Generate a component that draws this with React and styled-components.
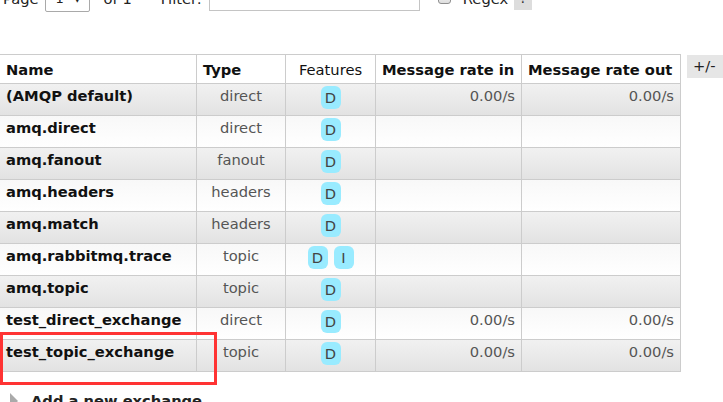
import React from "react";
import styled, { createGlobalStyle } from "styled-components";

const Global = createGlobalStyle`
  html, body { margin: 0; padding: 0; background: #fff; }
  body {
    font-family: "DejaVu Sans", Verdana, sans-serif;
    font-size: 14.7px;
    color: #222;
    overflow: hidden;
  }
`;

const Page = styled.div`
  position: relative;
  width: 723px;
  height: 402px;
  overflow: hidden;
`;

const Controls = styled.div`
  display: flex;
  align-items: center;
  height: 24px;
  margin-top: -12px;
  padding-left: 3px;
`;

const Label = styled.span`
  line-height: 17px;
  padding-bottom: 4px;
  margin-right: ${(p) => p.$mr || 0}px;
  color: #222;
  white-space: nowrap;
`;

const SelectBox = styled.div`
  box-sizing: border-box;
  width: 45px;
  height: 23px;
  border: 1px solid #a9a9a9;
  border-radius: 2px;
  display: flex;
  align-items: center;
  justify-content: space-between;
  padding: 0 8px 4px 10px;
  margin-right: 14px;
  font-size: 13px;
`;

const TextInput = styled.div`
  box-sizing: border-box;
  width: 211px;
  height: 22px;
  border: 1px solid #c4c4c4;
  margin-right: 18px;
  margin-bottom: 1px;
`;

const Check = styled.span`
  box-sizing: border-box;
  width: 13px;
  height: 13px;
  border: 1px solid #8f8f8f;
  border-radius: 3px;
  background: linear-gradient(#fcfcfc, #dedede);
  margin-right: 12px;
  margin-bottom: 6px;
`;

const Help = styled.span`
  display: inline-block;
  width: 18px;
  height: 20px;
  margin-left: 6px;
  background: #ddd;
  text-align: center;
  line-height: 16px;
  color: #333;
`;

const TableArea = styled.div`
  display: flex;
  align-items: flex-start;
  gap: 6px;
  margin-top: 42px;
  margin-left: -1px;
`;

const Table = styled.table`
  border-collapse: collapse;
  table-layout: fixed;
  width: 681px;
  flex: none;
`;

const Th = styled.th`
  box-sizing: border-box;
  width: ${(p) => p.$w}px;
  border: 1px solid #ccc;
  background: #fff;
  padding: 6px 6px 4px;
  line-height: 18px;
  text-align: ${(p) => (p.$center ? "center" : "left")};
  font-weight: ${(p) => (p.$light ? "normal" : "bold")};
  color: #111;
  white-space: nowrap;
  overflow: hidden;
`;

const Tr = styled.tr`
  background: ${(p) =>
    p.$alt
      ? "linear-gradient(#f1f1f1, #e2e2e2)"
      : "linear-gradient(#f8f8f8, #ffffff)"};
`;

const Td = styled.td`
  border: 1px solid #ccc;
  padding: 3px 6px 10px;
  line-height: 18px;
  vertical-align: top;
  white-space: nowrap;
  overflow: hidden;
  text-align: ${(p) => p.$align || "left"};
  font-weight: ${(p) => (p.$bold ? "bold" : "normal")};
  color: ${(p) => (p.$bold ? "#111" : "#555")};
`;

const FeatureCell = styled.td`
  border: 1px solid #ccc;
  padding: 2px 4px 6px;
  vertical-align: top;
  text-align: center;
  white-space: nowrap;
`;

const Badge = styled.abbr`
  display: inline-block;
  min-width: 12px;
  height: 23px;
  line-height: 23px;
  padding: 0 4px;
  margin: 0 3px;
  border-radius: 6px;
  background: #99ebff;
  color: #444;
  text-decoration: none;
  vertical-align: top;
`;

const ToggleColumns = styled.div`
  flex: none;
  margin-top: 1px;
  width: 37px;
  height: 23px;
  background: #e6e6e6;
  line-height: 22px;
  padding-left: 6px;
  box-sizing: border-box;
  color: #222;
`;

const Section = styled.h2`
  display: flex;
  align-items: center;
  gap: 13px;
  margin: 20px 0 0 10px;
  font-size: 14.7px;
  line-height: 18px;
  color: #222;
`;

const Arrow = styled.span`
  width: 0;
  height: 0;
  border-top: 8px solid transparent;
  border-bottom: 8px solid transparent;
  border-left: 8px solid #aaa;
`;

const Highlight = styled.div`
  position: absolute;
  left: 0;
  top: 332px;
  width: 217px;
  height: 53px;
  box-sizing: border-box;
  border: 3px solid #f33;
  pointer-events: none;
`;

const exchanges = [
  { name: "(AMQP default)", type: "direct", f: ["D"], rin: "0.00/s", rout: "0.00/s" },
  { name: "amq.direct", type: "direct", f: ["D"] },
  { name: "amq.fanout", type: "fanout", f: ["D"] },
  { name: "amq.headers", type: "headers", f: ["D"] },
  { name: "amq.match", type: "headers", f: ["D"] },
  { name: "amq.rabbitmq.trace", type: "topic", f: ["D", "I"] },
  { name: "amq.topic", type: "topic", f: ["D"] },
  { name: "test_direct_exchange", type: "direct", f: ["D"], rin: "0.00/s", rout: "0.00/s" },
  { name: "test_topic_exchange", type: "topic", f: ["D"], rin: "0.00/s", rout: "0.00/s" },
];

export default function App() {
  return (
    <>
      <Global />
      <Page>
        <Controls>
          <Label $mr={6}>Page</Label>
          <SelectBox>
            <span>1</span>
            <span>▾</span>
          </SelectBox>
          <Label $mr={29}>of 1</Label>
          <Label $mr={7}>Filter:</Label>
          <TextInput />
          <Check />
          <Label>Regex</Label>
          <Help>?</Help>
        </Controls>

        <TableArea>
          <Table>
            <thead>
              <tr>
                <Th $w={197}>Name</Th>
                <Th $w={89}>Type</Th>
                <Th $w={90} $center $light>Features</Th>
                <Th $w={146}>Message rate in</Th>
                <Th $w={159}>Message rate out</Th>
              </tr>
            </thead>
            <tbody>
              {exchanges.map((e, i) => (
                <Tr key={e.name} $alt={i % 2 === 0}>
                  <Td $bold>{e.name}</Td>
                  <Td $align="center">{e.type}</Td>
                  <FeatureCell>
                    {e.f.map((x) => (
                      <Badge key={x}>{x}</Badge>
                    ))}
                  </FeatureCell>
                  <Td $align="right">{e.rin || ""}</Td>
                  <Td $align="right">{e.rout || ""}</Td>
                </Tr>
              ))}
            </tbody>
          </Table>
          <ToggleColumns>+/-</ToggleColumns>
        </TableArea>

        <Section>
          <Arrow />
          Add a new exchange
        </Section>

        <Highlight />
      </Page>
    </>
  );
}
